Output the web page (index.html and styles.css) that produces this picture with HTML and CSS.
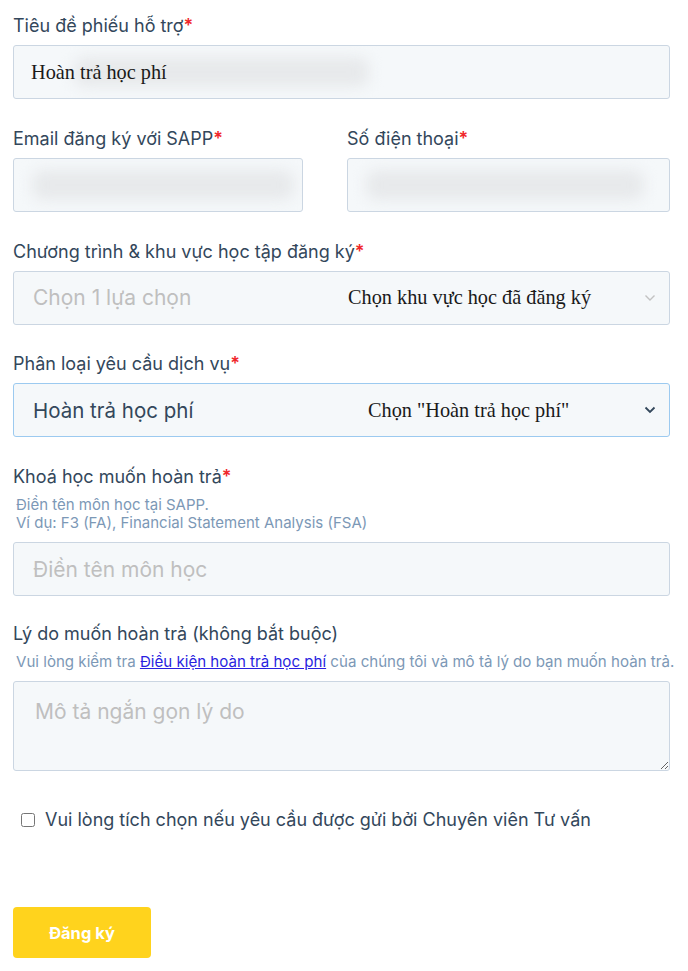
FILE: index.html
```html
<!DOCTYPE html>
<html lang="vi">
<head>
<meta charset="utf-8">
<title>Phiếu hỗ trợ</title>
<link rel="stylesheet" href="styles.css">
</head>
<body>
<form class="form">
  <div class="group">
    <label class="label">Tiêu đề phiếu hỗ trợ<span class="req">*</span></label>
    <div class="field">
      <span class="blur blur-title"></span>
      <span class="note note-title">Hoàn trả học phí</span>
    </div>
  </div>

  <div class="row">
    <div class="group col-email">
      <label class="label">Email đăng ký với SAPP<span class="req">*</span></label>
      <div class="field"><span class="blur blur-email"></span></div>
    </div>
    <div class="group col-phone">
      <label class="label">Số điện thoại<span class="req">*</span></label>
      <div class="field"><span class="blur blur-phone"></span></div>
    </div>
  </div>

  <div class="group">
    <label class="label">Chương trình &amp; khu vực học tập đăng ký<span class="req">*</span></label>
    <div class="field select">
      <span class="placeholder sel-text">Chọn 1 lựa chọn</span>
      <span class="note note-area">Chọn khu vực học đã đăng ký</span>
      <svg class="chev chev-light" width="12" height="8" viewBox="0 0 12 8"><path d="M1.5 1.5 L6 6 L10.5 1.5" fill="none" stroke="currentColor" stroke-width="1.4"/></svg>
    </div>
  </div>

  <div class="group">
    <label class="label">Phân loại yêu cầu dịch vụ<span class="req">*</span></label>
    <div class="field select focus">
      <span class="value sel-text">Hoàn trả học phí</span>
      <span class="note note-type">Chọn "Hoàn trả học phí"</span>
      <svg class="chev chev-dark" width="12" height="8" viewBox="0 0 12 8"><path d="M1.5 1.5 L6 6 L10.5 1.5" fill="none" stroke="currentColor" stroke-width="1.8"/></svg>
    </div>
  </div>

  <div class="group group-course">
    <label class="label">Khoá học muốn hoàn trả<span class="req">*</span></label>
    <p class="desc">Điền tên môn học tại SAPP.<br>Ví dụ: F3 (FA), Financial Statement Analysis (FSA)</p>
    <div class="field">
      <span class="placeholder sel-text">Điền tên môn học</span>
    </div>
  </div>

  <div class="group">
    <label class="label">Lý do muốn hoàn trả (không bắt buộc)</label>
    <p class="desc desc-one">Vui lòng kiểm tra <a class="link" href="#">Điều kiện hoàn trả học phí</a> của chúng tôi và mô tả lý do bạn muốn hoàn trả.</p>
    <textarea class="textarea" placeholder="Mô tả ngắn gọn lý do"></textarea>
  </div>

  <label class="check">
    <input type="checkbox" class="checkbox">
    <span>Vui lòng tích chọn nếu yêu cầu được gửi bởi Chuyên viên Tư vấn</span>
  </label>

  <button type="button" class="btn">Đăng ký</button>
</form>
</body>
</html>
```

FILE: styles.css
```css
* { box-sizing: border-box; }

html, body {
  margin: 0;
  padding: 0;
  background: #ffffff;
}

body {
  font-family: Inter, "Noto Sans", sans-serif;
  color: #33475b;
}

.form {
  width: 688px;
  padding: 15px 18px 0 13px;
  display: flex;
  flex-direction: column;
}

.group {
  display: flex;
  flex-direction: column;
  margin-bottom: 28.75px;
}

.group-course { margin-bottom: 27px; }

.row {
  display: flex;
  gap: 44px;
}

.col-email { width: 290px; }
.col-phone { flex: 1; }

.label {
  font-size: 18px;
  line-height: 22px;
  color: #33475b;
  margin-bottom: 8px;
}

.req { color: #f0262a; font-weight: 600; }

.field {
  height: 54px;
  background: #f5f8fa;
  border: 1px solid #cbd6e2;
  border-radius: 3px;
  display: flex;
  align-items: center;
  padding: 0 19px;
  position: relative;
  overflow: hidden;
}

.field.focus { border-color: #9ccaf0; }

.blur {
  position: absolute;
  height: 30px;
  background: #e7e9eb;
  filter: blur(7px);
  border-radius: 10px;
}

.blur-title { left: 60px; width: 295px; top: 11px; }
.blur-email { left: 18px; width: 262px; top: 11px; }
.blur-phone { left: 18px; width: 278px; top: 11px; }

.note {
  position: relative;
  font-family: "Liberation Serif", "DejaVu Serif", serif;
  font-size: 20.3px;
  color: #1a1a1a;
}

.note-title { margin-left: -2px; }

.sel-text {
  font-size: 21px;
  width: 315px;
  flex: none;
}

.placeholder { color: #bfbfbf; }
.value { color: #33475b; font-size: 20.5px; }

.note-type { margin-left: 20px; }

.chev {
  margin-left: auto;
  margin-right: -6px;
}

.chev-light { color: #c2c2c2; }
.chev-dark { color: #33475b; }

.desc {
  margin: 0 0 10px 3px;
  font-size: 15px;
  line-height: 18px;
  color: #7c98b6;
}

.desc-one {
  white-space: nowrap;
  font-size: 15.1px;
  margin-right: -20px;
}

.link {
  color: #2a1fe0;
  text-decoration: underline;
}

.textarea {
  height: 90px;
  width: 100%;
  background: #f5f8fa;
  border: 1px solid #cbd6e2;
  border-radius: 3px;
  padding: 17px 21px;
  font-family: Inter, "Noto Sans", sans-serif;
  font-size: 21px;
  color: #33475b;
  resize: vertical;
  display: block;
}

.textarea::placeholder { color: #bfbfbf; }

.check {
  display: flex;
  align-items: center;
  gap: 10px;
  padding-left: 8px;
  margin-top: 8.25px;
  font-size: 18px;
  line-height: 24px;
  color: #33475b;
}

.checkbox {
  margin: 0;
  width: 14px;
  height: 14px;
}

.btn {
  align-self: flex-start;
  margin-top: 75px;
  width: 138px;
  height: 51px;
  background: #ffd31d;
  border: none;
  border-radius: 4px;
  color: #ffffff;
  font-family: Inter, "Noto Sans", sans-serif;
  font-weight: 700;
  font-size: 16.5px;
}
```
